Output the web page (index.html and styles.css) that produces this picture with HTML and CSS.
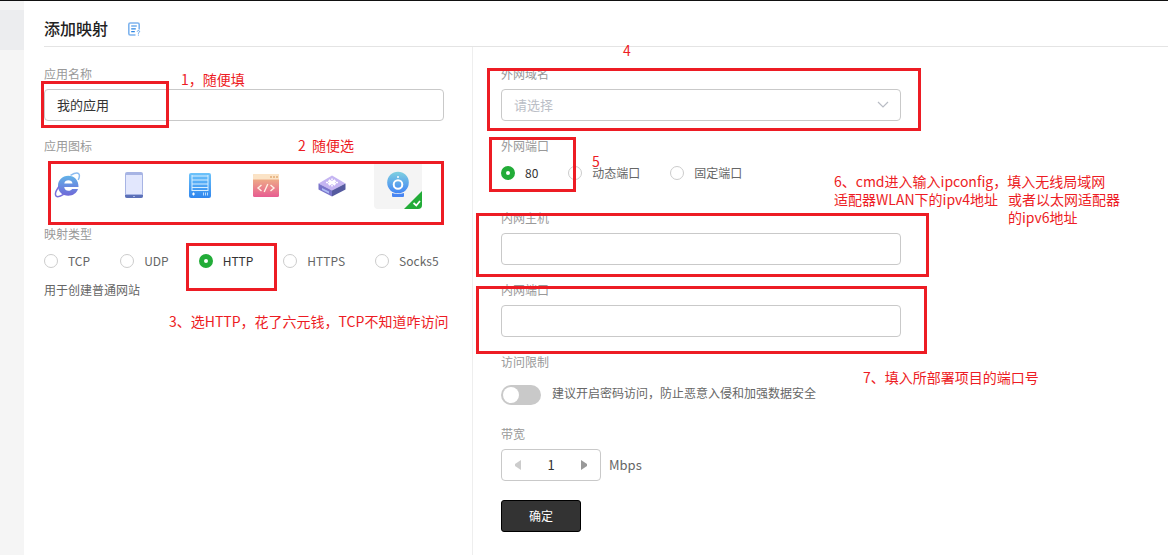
FILE: index.html
```html
<!DOCTYPE html>
<html lang="zh-CN">
<head>
  <meta charset="UTF-8">
  <meta name="viewport" content="width=device-width, initial-scale=1.0">
  <title>添加映射</title>
  <link rel="stylesheet" href="styles.css">
</head>
<body>
  <div class="page">
    <aside class="sidebar">
      <div class="sidebar-active"></div>
    </aside>

    <main class="main">
      <header class="header">
        <h1>添加映射</h1>
        <a href="#" class="doc-link" aria-label="帮助文档">
          <svg width="14" height="14" viewBox="0 0 14 14" fill="none">
            <path d="M12.2 7.5V2.5Q12.2 1 10.7 1H3.3Q1.8 1 1.8 2.5v9Q1.8 13 3.3 13h5.2" stroke="#7fb4ee" stroke-width="1.6"/>
            <path d="M4.2 4h5.6M4.2 6.8h4.6M4.2 9.6h3.6" stroke="#2b85e4" stroke-width="1.2"/>
            <path d="M10.2 9.6q0-1 1.2-1t1.2 1q0 .7-1.2 1.3v.8M11.4 12.6v1" stroke="#5a9fea" stroke-width="1"/>
          </svg>
        </a>
      </header>

      <form class="form">
        <section class="column column-left">
          <div class="field">
            <label class="label" for="app-name">应用名称</label>
            <input class="input" id="app-name" type="text" value="我的应用">
          </div>

          <div class="field">
            <span class="label">应用图标</span>
            <div class="icons">
              <button type="button" class="icon" aria-label="浏览器">
                <svg width="28" height="28" viewBox="0 0 28 28" fill="none">
                  <defs>
                    <linearGradient id="g-ie" x1="0" y1="0" x2="0" y2="1">
                      <stop offset="0" stop-color="#62b3e8"/>
                      <stop offset="1" stop-color="#6f68d8"/>
                    </linearGradient>
                  </defs>
                  <path d="M24.500 16H10.200c.2 2.300 1.900 3.800 4.300 3.800 1.600 0 2.900-.7 3.600-1.800h5.900c-1.300 4-5 6.700-9.700 6.700C8.300 24.700 4 20.600 4 14.900 4 9 8.300 4.700 14.300 4.700c6.200 0 10.300 4.400 10.200 11.300zM10.300 12.400h8.200c-.3-1.900-1.900-3.100-4.100-3.100s-3.700 1.200-4.100 3.100z" fill="url(#g-ie)"/>
                  <path d="M5 15.500C1.700 20 .8 23.700 2.200 25.100c1.300 1.200 4.400.2 7.800-1.900" stroke="#7871dc" stroke-width="1.500"/>
                  <path d="M16.500 4.300C20.500 2 23.500 1.500 24.700 2.700c1.200 1.300.8 3.600-.5 6.300" stroke="#8dbcf0" stroke-width="1.500"/>
                </svg>
              </button>
              <button type="button" class="icon" aria-label="平板">
                <svg width="28" height="28" viewBox="0 0 28 28">
                  <rect x="5" y="1" width="18" height="26" rx="2" fill="#a7b4e4"/>
                  <rect x="6" y="4" width="16" height="19" fill="#e2e7fd"/>
                  <path d="M5 24h18v1q0 2-2 2H7q-2 0-2-2z" fill="#5b70b8"/>
                  <rect x="13" y="25" width="2" height="1" fill="#a7b4e4"/>
                </svg>
              </button>
              <button type="button" class="icon" aria-label="服务器">
                <svg width="28" height="28" viewBox="0 0 28 28">
                  <defs>
                    <linearGradient id="g-srv" x1="0" y1="0" x2="0" y2="1">
                      <stop offset="0" stop-color="#6cc3fa"/>
                      <stop offset="1" stop-color="#2f86ee"/>
                    </linearGradient>
                  </defs>
                  <rect x="3" y="2" width="22" height="25" rx="2" fill="url(#g-srv)"/>
                  <path d="M6 4v16M22 4v16" stroke="#d8efff" stroke-width="1"/>
                  <path d="M6 5h16M6 9h16M6 13h16M6 16.500h16M6 19.500h16" stroke="#d8efff" stroke-width="1.200"/>
                  <path d="M7.500 21.500v3M6 23h3" stroke="#fff" stroke-width="1.200"/>
                  <path d="M17.500 21.500v3M19.500 21.500v3M21.500 21.500v3" stroke="#b9dcff" stroke-width="1"/>
                </svg>
              </button>
              <button type="button" class="icon" aria-label="代码">
                <svg width="28" height="28" viewBox="0 0 28 28" fill="none">
                  <defs>
                    <linearGradient id="g-code" x1="0" y1="0" x2="0" y2="1">
                      <stop offset="0" stop-color="#f0c283"/>
                      <stop offset="1" stop-color="#e75c91"/>
                    </linearGradient>
                  </defs>
                  <rect x="1" y="3" width="26" height="23" rx="1.500" fill="url(#g-code)"/>
                  <path d="M1 8.500v-4Q1 3 2.500 3h23Q27 3 27 4.500v4z" fill="#fbe3c6"/>
                  <path d="M18 6h2M21 6h2M24 6h2" stroke="#e8b98a" stroke-width="1.800"/>
                  <path d="M9.500 14l-3.500 3 3.500 3M18.500 14l3.500 3-3.500 3M15.800 13l-3.600 8" stroke="#fff0e4" stroke-width="1.400"/>
                </svg>
              </button>
              <button type="button" class="icon" aria-label="游戏">
                <svg width="28" height="28" viewBox="0 0 28 28" fill="none">
                  <path d="M14 4.500l13.500 8L14 19.500.5 12.500z" fill="#c5b5f2"/>
                  <path d="M.5 12.500L14 19.500v6L.5 18.500z" fill="#7974ca"/>
                  <path d="M27.500 12.500L14 19.500v6l13.500-7z" fill="#555a9f"/>
                  <path d="M4 17l7 3.500v2L4 19z" fill="#aebcf5"/>
                  <path d="M10.500 9.500l7 4M17.500 9.500l-7 4" stroke="#fff" stroke-width="2.600"/>
                  <path d="M14 7.500v1.500M14 14v1.500M8 11.500h2M18 11.500h2" stroke="#fff" stroke-width="1.500"/>
                </svg>
              </button>
              <button type="button" class="icon icon-selected" aria-label="摄像头">
                <svg width="28" height="28" viewBox="0 0 28 28" fill="none">
                  <defs>
                    <linearGradient id="g-cam" x1="0" y1="0" x2="0" y2="1">
                      <stop offset="0" stop-color="#7fd0e0"/>
                      <stop offset="1" stop-color="#4285f5"/>
                    </linearGradient>
                  </defs>
                  <circle cx="14" cy="11.500" r="10.800" fill="url(#g-cam)"/>
                  <circle cx="14" cy="13.500" r="4.300" stroke="#fff" stroke-width="2"/>
                  <circle cx="14" cy="6" r="1" fill="#fff"/>
                  <path d="M8 22q6 2 12 0v3q0 1-1 1H9q-1 0-1-1z" fill="#4785f2"/>
                </svg>
                <svg class="check" width="18" height="18" viewBox="0 0 18 18" fill="none">
                  <path d="M18 0v18H0z" fill="#22ac38"/>
                  <path d="M9.500 12l2.800 2.500L16 10" stroke="#fff" stroke-width="1.700"/>
                </svg>
              </button>
            </div>
          </div>

          <div class="field">
            <span class="label">映射类型</span>
            <div class="radios">
              <label class="radio"><input type="radio" name="type">TCP</label>
              <label class="radio"><input type="radio" name="type">UDP</label>
              <label class="radio"><input type="radio" name="type" checked>HTTP</label>
              <label class="radio"><input type="radio" name="type">HTTPS</label>
              <label class="radio"><input type="radio" name="type">Socks5</label>
            </div>
            <p class="hint">用于创建普通网站</p>
          </div>
        </section>

        <section class="column column-right">
          <div class="field">
            <label class="label" for="domain">外网域名</label>
            <div class="select-wrap">
              <select class="input select" id="domain">
                <option>请选择</option>
              </select>
              <svg class="arrow" width="12" height="8" viewBox="0 0 12 8" fill="none">
                <path d="M1 1l5 5 5-5" stroke="#b8bcc4" stroke-width="1.200"/>
              </svg>
            </div>
          </div>

          <div class="field">
            <span class="label">外网端口</span>
            <div class="radios">
              <label class="radio"><input type="radio" name="port" checked>80</label>
              <label class="radio"><input type="radio" name="port">动态端口</label>
              <label class="radio"><input type="radio" name="port">固定端口</label>
            </div>
          </div>

          <div class="field">
            <label class="label" for="host">内网主机</label>
            <input class="input" id="host" type="text">
          </div>

          <div class="field">
            <label class="label" for="inner-port">内网端口</label>
            <input class="input" id="inner-port" type="text">
          </div>

          <div class="field">
            <span class="label">访问限制</span>
            <label class="access">
              <input class="switch" type="checkbox">
              <span>建议开启密码访问，防止恶意入侵和加强数据安全</span>
            </label>
          </div>

          <div class="field">
            <label class="label" for="bandwidth">带宽</label>
            <div class="bandwidth">
              <div class="stepper">
                <button type="button" class="step" aria-label="减少" disabled>
                  <svg width="6" height="10" viewBox="0 0 6 10"><path d="M6 0v10L0 6V4z" fill="#ccc"/></svg>
                </button>
                <input class="step-value" id="bandwidth" type="text" value="1">
                <button type="button" class="step" aria-label="增加">
                  <svg width="6" height="10" viewBox="0 0 6 10"><path d="M0 0v10l6-4V4z" fill="#999"/></svg>
                </button>
              </div>
              <span>Mbps</span>
            </div>
          </div>

          <button type="button" class="submit">确定</button>
        </section>
      </form>
    </main>

    <!-- 标注 -->
    <div class="mark mark-name"></div>
    <div class="mark mark-icon"></div>
    <div class="mark mark-type"></div>
    <div class="mark mark-domain"></div>
    <div class="mark mark-port"></div>
    <div class="mark mark-host"></div>
    <div class="mark mark-inner"></div>

    <p class="note note-1">1，随便填</p>
    <p class="note note-2">2  随便选</p>
    <p class="note note-3">3、选HTTP，花了六元钱，TCP不知道咋访问</p>
    <p class="note note-4">4</p>
    <p class="note note-5">5</p>
    <p class="note note-6">6、cmd进入输入ipconfig，填入无线局域网<br>适配器WLAN下的ipv4地址</p>
    <p class="note note-6b">或者以太网适配器<br>的ipv6地址</p>
    <p class="note note-7">7、填入所部署项目的端口号</p>
  </div>
</body>
</html>
```
FILE: styles.css
```css
* {
  box-sizing: border-box;
}
body {
  margin: 0;
  font-family: "Noto Sans CJK SC", sans-serif;
  font-size: 12px;
  line-height: 20px;
  color: #666;
  background: #fff;
}
h1, p {
  margin: 0;
}
button, input, select {
  font-family: inherit;
  margin: 0;
}
.page {
  position: relative;
  display: flex;
  min-height: 100vh;
  border-top: 1px solid #111;
}
.sidebar {
  flex: 0 0 24px;
  padding-top: 9px;
  background: #f5f5f5;
}
.sidebar-active {
  height: 40px;
  background: #ecedef;
}
.main {
  flex: 1;
  display: flex;
  flex-direction: column;
  padding-left: 20px;
}
.header {
  display: flex;
  align-items: center;
  gap: 19px;
  height: 46px;
  padding-top: 8px;
  border-bottom: 1px solid #e4e4e4;
}
.header h1 {
  font-size: 16px;
  font-weight: 500;
  line-height: 24px;
  color: #222;
}
.doc-link {
  display: flex;
  padding-top: 2px;
}

/* form */
.form {
  flex: 1;
  display: flex;
}
.column {
  display: flex;
  flex-direction: column;
  gap: 15px;
  padding-top: 17px;
}
.column-left {
  flex: 0 0 429px;
  padding-right: 28px;
  border-right: 1px solid #eee;
}
.column-right {
  flex: 1;
  padding-left: 28px;
}
.field {
  display: flex;
  flex-direction: column;
  gap: 5px;
}
.label {
  color: #999;
}
.input {
  width: 100%;
  max-width: 400px;
  height: 32px;
  padding: 0 12px 2px;
  border: 1px solid #c9c9c9;
  border-radius: 4px;
  background: #fff;
  font-size: 13px;
  color: #333;
}
.select-wrap {
  position: relative;
  max-width: 400px;
}
.select {
  appearance: none;
  color: #bbbec6;
}
.arrow {
  position: absolute;
  right: 12px;
  top: 12px;
  pointer-events: none;
}

.icons {
  display: flex;
  gap: 18px;
}
.icon {
  display: flex;
  align-items: center;
  justify-content: center;
  width: 48px;
  height: 48px;
  padding: 0;
  border: none;
  border-radius: 4px;
  background: none;
}
.icon-selected {
  position: relative;
  overflow: hidden;
  background: #f4f4f4;
}
.check {
  position: absolute;
  right: 0;
  bottom: 0;
}

.radios {
  display: flex;
  align-items: flex-start;
  gap: 30px;
  min-height: 32px;
}
.column-left .radios {
  min-height: 26px;
}
.radio {
  display: flex;
  align-items: center;
  gap: 10px;
  height: 24px;
}
.radio:has(input:checked) {
  color: #333;
}
.radio input {
  appearance: none;
  width: 14px;
  height: 14px;
  border: 1px solid #ccc;
  border-radius: 50%;
  background: #fff;
}
.radio input:checked {
  border: 5px solid #22ac38;
}

.access {
  display: flex;
  gap: 11px;
  height: 32px;
  padding-top: 8px;
  line-height: 16px;
}
.switch {
  appearance: none;
  width: 40px;
  height: 20px;
  padding: 2px;
  border-radius: 10px;
  background: #c9c9c9;
}
.switch::before {
  content: "";
  display: block;
  width: 16px;
  height: 16px;
  border-radius: 50%;
  background: #fff;
}
.switch:checked {
  background: #22ac38;
}
.switch:checked::before {
  margin-left: auto;
}

.bandwidth {
  display: flex;
  align-items: center;
  gap: 8px;
  font-size: 13px;
}
.stepper {
  display: flex;
  width: 100px;
  height: 32px;
  border: 1px solid #c9c9c9;
  border-radius: 4px;
}
.step {
  display: flex;
  align-items: center;
  justify-content: center;
  flex: 0 0 32px;
  padding: 0;
  border: none;
  background: none;
}
.step-value {
  flex: 1;
  min-width: 0;
  padding: 0 0 2px;
  border: none;
  background: none;
  font-size: 13px;
  text-align: center;
  color: #333;
}
.submit {
  width: 80px;
  height: 32px;
  margin-top: 4px;
  padding: 0 0 2px;
  border: 1px solid #000;
  border-radius: 3px;
  background: #333;
  font-size: 12px;
  color: #fff;
}

/* annotations drawn over the form */
.mark {
  position: absolute;
  border: 3px solid #ed1c24;
  pointer-events: none;
}
.mark-name { left: 41px; top: 80px; width: 128px; height: 47px; }
.mark-icon { left: 48px; top: 160px; width: 396px; height: 64px; }
.mark-type { left: 186px; top: 242px; width: 91px; height: 48px; }
.mark-domain { left: 487px; top: 67px; width: 434px; height: 63px; }
.mark-port { left: 489px; top: 136px; width: 87px; height: 55px; }
.mark-host { left: 476px; top: 212px; width: 453px; height: 64px; }
.mark-inner { left: 476px; top: 285px; width: 451px; height: 68px; }

.note {
  position: absolute;
  font-size: 14px;
  line-height: 18px;
  white-space: pre;
  color: #ed1c24;
}
.note-1 { left: 181px; top: 69px; }
.note-2 { left: 298px; top: 135px; }
.note-3 { left: 169px; top: 311px; }
.note-4 { left: 623px; top: 40px; }
.note-5 { left: 592px; top: 151px; }
.note-6 { left: 834px; top: 171px; }
.note-6b { left: 1008px; top: 189px; }
.note-7 { left: 863px; top: 367px; }
```
